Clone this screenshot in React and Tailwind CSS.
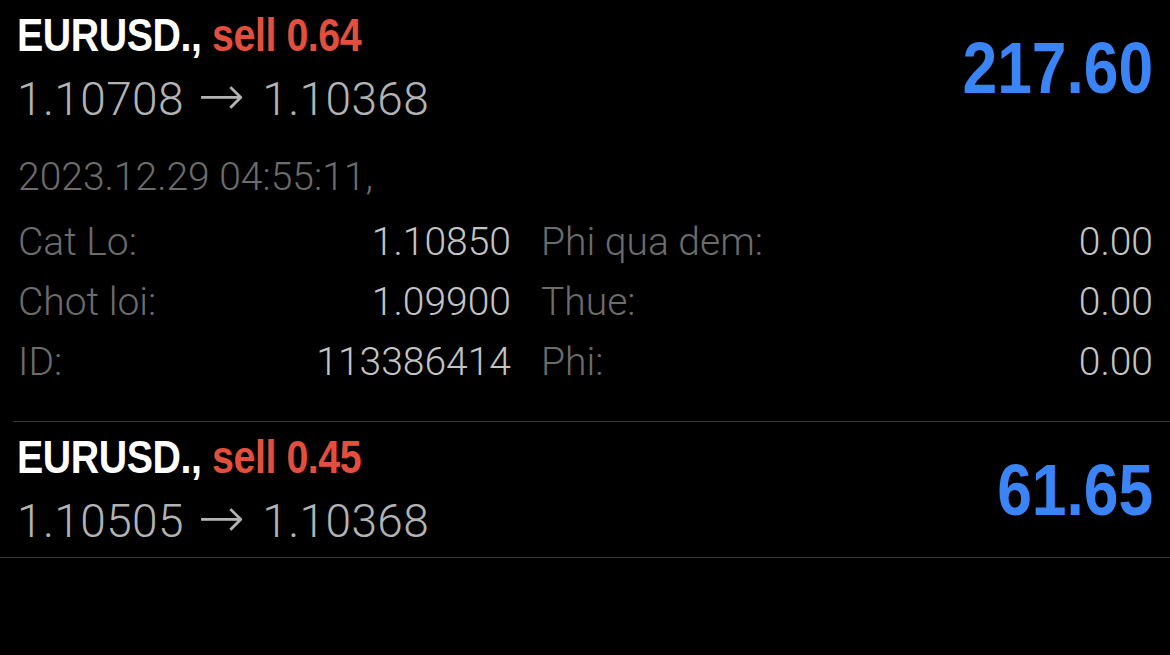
import React from 'react';

const trades = [
  {
    symbol: 'EURUSD.,',
    side: 'sell 0.64',
    open: '1.10708',
    close: '1.10368',
    profit: '217.60',
    expanded: true,
    time: '2023.12.29 04:55:11,',
    left: [
      ['Cat Lo:', '1.10850'],
      ['Chot loi:', '1.09900'],
      ['ID:', '113386414'],
    ],
    right: [
      ['Phi qua dem:', '0.00'],
      ['Thue:', '0.00'],
      ['Phi:', '0.00'],
    ],
  },
  {
    symbol: 'EURUSD.,',
    side: 'sell 0.45',
    open: '1.10505',
    close: '1.10368',
    profit: '61.65',
    expanded: false,
  },
];

const bold = { fontFamily: '"Liberation Sans", Arial, sans-serif' };
const light = { fontFamily: 'Roboto, "Liberation Sans", sans-serif' };
const arrow = { fontFamily: '"DejaVu Sans", "Liberation Sans", sans-serif' };

function TradeRow({ trade, inset }) {
  return (
    <div className={`border-b border-[#38383a] ${inset ? 'ml-[13px]' : ''}`}>
      <div className={`flex items-center justify-between pr-[17px] ${inset ? 'pl-[4px]' : 'pl-[17px]'}`}>
        <div className="pt-[12px] pb-[13px]">
          <div
            className="inline-block origin-left scale-x-[0.855] whitespace-nowrap text-[46px] leading-none font-bold tracking-[-0.5px]"
            style={bold}
          >
            <span className="text-white">{trade.symbol}</span>{' '}
            <span className="text-[#e2503d]">{trade.side}</span>
          </div>
          <div className="mt-[18px] h-[46px] whitespace-nowrap text-[46px] leading-none font-light tracking-[0.4px] text-[#b3b3b3]" style={light}>
            {trade.open}
            <span className="ml-[14px] mr-[17px] text-[56px] font-extralight leading-[0] text-[#b3b3b3]" style={arrow}>→</span>
            {trade.close}
          </div>
        </div>
        <div
          className="inline-block origin-right scale-x-[0.866] text-[72px] leading-none font-bold text-[#3b84f5]"
          style={bold}
        >
          {trade.profit}
        </div>
      </div>

      {trade.expanded && (
        <div className="pl-[5px] pr-[17px] pb-[29px] font-light text-[39px]" style={light}>
          <div className="mt-[12px] h-[60px] leading-[60px] text-[#6c6c6c]">{trade.time}</div>
          <div className="mt-[5px] grid grid-cols-[493px_1fr] gap-x-[30px]">
            <div>
              {trade.left.map(([label, value]) => (
                <div key={label} className="h-[60px] leading-[60px] flex justify-between">
                  <span className="text-[#6c6c6c]">{label}</span>
                  <span className="text-[#c4c4c4]">{value}</span>
                </div>
              ))}
            </div>
            <div>
              {trade.right.map(([label, value]) => (
                <div key={label} className="h-[60px] leading-[60px] flex justify-between">
                  <span className="text-[#6c6c6c]">{label}</span>
                  <span className="text-[#c4c4c4]">{value}</span>
                </div>
              ))}
            </div>
          </div>
        </div>
      )}
    </div>
  );
}

export default function App() {
  return (
    <div className="min-h-screen bg-black">
      <TradeRow trade={trades[0]} inset />
      <TradeRow trade={trades[1]} />
    </div>
  );
}
